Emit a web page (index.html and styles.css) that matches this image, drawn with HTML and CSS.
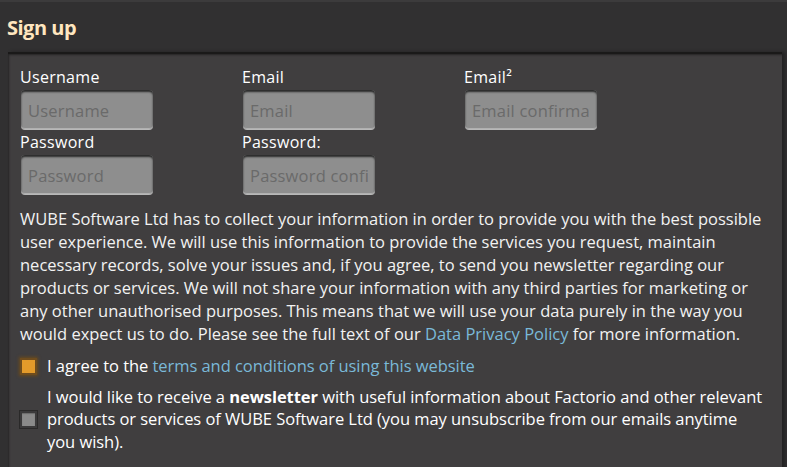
FILE: index.html
```html
<!DOCTYPE html>
<html>
<head>
<meta charset="utf-8">
<link rel="stylesheet" href="styles.css">
</head>
<body>
<div class="page">
  <h2 class="title">Sign up</h2>
  <div class="panel">
    <div class="fields">
      <label class="field">
        <span class="label">Username</span>
        <input class="input" type="text" placeholder="Username">
      </label>
      <label class="field">
        <span class="label">Email</span>
        <input class="input" type="text" placeholder="Email">
      </label>
      <label class="field">
        <span class="label">Email²</span>
        <input class="input" type="text" placeholder="Email confirmation">
      </label>
      <label class="field">
        <span class="label">Password</span>
        <input class="input" type="password" placeholder="Password">
      </label>
      <label class="field">
        <span class="label">Password:</span>
        <input class="input" type="password" placeholder="Password confirmation">
      </label>
    </div>
    <p class="info">WUBE Software Ltd has to collect your information in order to provide you with the best possible user experience. We will use this information to provide the services you request, maintain necessary records, solve your issues and, if you agree, to send you newsletter regarding our products or services. We will not share your information with any third parties for marketing or any other unauthorised purposes. This means that we will use your data purely in the way you would expect us to do. Please see the full text of our <a href="#">Data Privacy Policy</a> for more information.</p>
    <div class="check-row check-first">
      <span class="box box-on"></span>
      <span class="check-text">I agree to the <a href="#">terms and conditions of using this website</a></span>
    </div>
    <div class="check-row">
      <span class="box"></span>
      <span class="check-text">I would like to receive a <b>newsletter</b> with useful information about Factorio and other relevant products or services of WUBE Software Ltd (you may unsubscribe from our emails anytime you wish).</span>
    </div>
  </div>
</div>
</body>
</html>
```
FILE: styles.css
```css
html, body {
  margin: 0;
  padding: 0;
  background: #313031;
}
body {
  font-family: "Open Sans", "Noto Sans", sans-serif;
  color: #ffffff;
  width: 787px;
  height: 467px;
  overflow: hidden;
}
.page {
  border-top: 2px solid #3c3b3c;
  padding: 0 5px 0 8px;
}
.title {
  margin: 0 0 0 -1px;
  padding: 13px 0 12px 0;
  font-size: 20px;
  line-height: 25px;
  font-weight: 700;
  color: #ffe6bf;
  letter-spacing: -0.5px;
}
.panel {
  background: #403e3f;
  border-top: 2px solid #1a1919;
  box-shadow: inset 2px 2px 2px -1px #252425, 3px 0 3px #232223;
  padding: 12px 16px 20px 12px;
  min-height: 381px;
}
.fields {
  display: grid;
  grid-template-columns: 222px 222px 222px;
}
.field {
  display: flex;
  flex-direction: column;
  align-items: flex-start;
}
.label {
  font-size: 16px;
  line-height: 22px;
  letter-spacing: 0.3px;
}
.input {
  box-sizing: border-box;
  width: 132px;
  height: 39px;
  margin: 2px 0 2px 1px;
  border: none;
  border-radius: 4px;
  background: #8e8e8e;
  box-shadow: inset 0 2px 2px #2a2a2a, inset 0 -1px 0 #b0b0b0, 0 1px 0 #b8b8b8;
  font-family: inherit;
  font-size: 16.5px;
  letter-spacing: 0.2px;
  color: #333;
  padding: 2px 7px 0;
  outline: none;
}
.input::placeholder {
  color: #6a6a6a;
}
.info {
  margin: 11px 0 0 0;
  font-size: 16.5px;
  line-height: 23px;
  letter-spacing: 0;
  color: #f2f2f2;
}
a {
  color: #7ab9d8;
  text-decoration: none;
}
.check-row {
  display: flex;
  align-items: center;
  gap: 10px;
  margin-top: 8px;
  margin-right: -1px;
  font-size: 16.5px;
  line-height: 22.5px;
  letter-spacing: -0.05px;
}
.check-first {
  margin-top: 10px;
}
.box {
  flex: none;
  box-sizing: border-box;
  width: 17px;
  height: 17px;
  background: #8a8a8a;
  border: 2px solid #3b3a3b;
  box-shadow: 0 0 0 1px #2a2929, inset 0 1px 1px #6a6a6a;
}
.box-on {
  background: #e39a2a;
  border-color: #6e4c1e;
  box-shadow: 0 0 3px 1px #6a4a1c;
}
.check-text b {
  font-weight: 700;
}
```
